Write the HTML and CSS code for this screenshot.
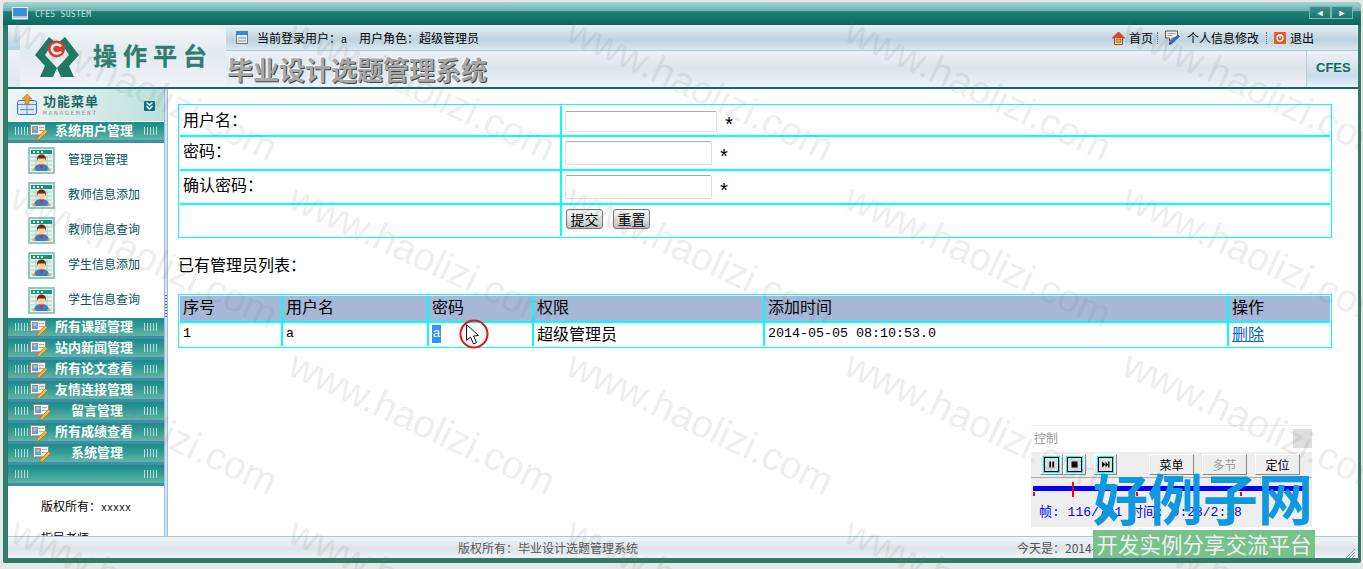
FILE: index.html
```html
<!DOCTYPE html>
<html lang="zh-CN">
<head>
    <meta charset="UTF-8">
    <title>毕业设计选题管理系统</title>
    <link rel="stylesheet" href="styles.css">
</head>
<body>
    <svg class="sprites" width="0" height="0">
        <symbol id="person-sheet" viewBox="0 0 27 27">
            <rect width="27" height="27" fill="#8fcac2"/>
            <rect x="2" y="2" width="23" height="23" fill="#e6f3ea"/>
            <rect x="3" y="3" width="21" height="4" fill="#1f8f80"/>
            <path d="M5 4h2v2H5zM9 4h2v2H9zM13 4h2v2h-2z" fill="#d8f0e8"/>
            <path d="M3 10h21M3 14h21M3 18h21M3 22h21M8 8v16M19 8v16" stroke="#a9d0bc" fill="none"/>
            <path d="M6 24c0-5 3-7 7.500-7s7.500 2 7.500 7z" fill="#3c7cc8"/>
            <path d="M4.500 22h3v2h-3zM19.500 22h3v2h-3z" fill="#f0a030"/>
            <path d="M12.500 17h2l.5 3-1.500 2-1.500-2z" fill="#d8282c"/>
            <ellipse cx="13.500" cy="13" rx="4" ry="4.500" fill="#f7cfa0"/>
            <path d="M9 14c-.5-5 2-6.500 4.500-6.500S18.500 9 18 14l-1-2.500h-7z" fill="#6a2a10"/>
        </symbol>
        <symbol id="card-pencil" viewBox="0 0 18 18">
            <rect x=".5" y="1.500" width="15" height="11" fill="#f4f4f4" stroke="#8a8a8a"/>
            <rect x="2" y="3" width="6" height="7" fill="#6aa0d8"/>
            <circle cx="5" cy="5.500" r="1.800" fill="#e8b078"/>
            <path d="M9 4h5v1H9zM9 7h5v1H9zM2 11h11v1H2z" fill="#b0b0b0"/>
            <path d="M15.500 6.500l2 2-8 8-3 1 1-3z" fill="#eeb838" stroke="#a06a10" stroke-width=".6"/>
        </symbol>
    </svg>

    <div class="window">
        <div class="titlebar">
            <svg class="monitor" width="16" height="13" viewBox="0 0 16 13">
                <rect x=".5" y=".5" width="15" height="9.500" fill="#3c8fd8" stroke="#f0f4f4"/>
                <rect x="0" y="10.500" width="16" height="2" fill="#e8eeee"/>
            </svg>
            <span class="titlebar-name">CFES SUSTEM</span>
            <div class="nav-arrows">
                <span class="nav-arrow">◄</span>
                <span class="nav-arrow">►</span>
            </div>
        </div>

        <div class="frame">
            <div class="header">
                <div class="brand">
                    <div class="brand-tab">
                        <svg class="logo" width="46" height="42" viewBox="0 0 46 42">
                            <path d="M15 1L1 19l10 11-5 11h13l4-9-12-13L20 5z" fill="#1e7a5e"/>
                            <path d="M31 1l14 18-10 11 5 11H27l-4-9 12-13L26 5z" fill="#1e7a5e"/>
                            <circle cx="22.500" cy="13" r="8.500" fill="#e8342c"/>
                            <path d="M27 10.500a5 4.500 0 1 0 0 5" fill="none" stroke="#fff" stroke-width="2.600"/>
                        </svg>
                        <span class="brand-name">操作平台</span>
                    </div>
                </div>
                <div class="header-main">
                    <div class="userbar">
                        <svg class="userbar-icon" width="12" height="13" viewBox="0 0 12 13">
                            <rect x=".5" y=".5" width="11" height="12" fill="#e8e8e8" stroke="#6a7a88"/>
                            <rect x="1" y="1" width="10" height="3" fill="#2f8ae0"/>
                            <path d="M2 7h8M2 10h8" stroke="#8a9aa8"/>
                        </svg>
                        <span>当前登录用户：<span class="mono-small">a</span></span>
                        <span class="role">用户角色：超级管理员</span>
                        <div class="userbar-links">
                            <a class="toplink">
                                <svg width="13" height="14" viewBox="0 0 13 14">
                                    <path d="M6.500 1L.5 7h2v6.500h8V7h2z" fill="#f4e8c8" stroke="#a04020"/>
                                    <path d="M6.500 1L.5 7h12z" fill="#d8442c"/>
                                    <rect x="4" y="8" width="5" height="3.500" fill="#f0b020" stroke="#805010" stroke-width=".6"/>
                                </svg>
                                首页
                            </a>
                            <span class="sep sep--first"></span>
                            <a class="toplink toplink--wide">
                                <svg width="15" height="15" viewBox="0 0 15 15">
                                    <path d="M.5 1h12v7h-5l-3 3V8h-4z" fill="#f4f4f4" stroke="#555"/>
                                    <path d="M2.500 3.500h8M2.500 5.500h5" stroke="#999"/>
                                    <path d="M13 5l1.500 1.500-8 7.500-2.500.5.500-2.500z" fill="#2f70c8" stroke="#123a78" stroke-width=".5"/>
                                    <path d="M4 14.500l.5-2.500 2 2z" fill="#d82820"/>
                                </svg>
                                个人信息修改
                            </a>
                            <span class="sep"></span>
                            <a class="toplink">
                                <svg width="12" height="12" viewBox="0 0 12 12">
                                    <rect width="12" height="12" rx="1" fill="#e8582c"/>
                                    <circle cx="6" cy="6" r="3" fill="none" stroke="#fff" stroke-width="1.300"/>
                                    <path d="M6 2.500v3.500" stroke="#fff" stroke-width="1.300"/>
                                </svg>
                                退出
                            </a>
                        </div>
                    </div>
                    <div class="titleband">
                        <h1 class="system-title">毕业设计选题管理系统</h1>
                        <div class="cfes">CFES</div>
                    </div>
                </div>
            </div>

            <div class="body">
                <div class="sidebar">
                    <div class="menu-head">
                        <svg width="20" height="21" viewBox="0 0 20 21">
                            <rect x=".5" y="6.500" width="19" height="14" rx="2" fill="#d8e8fa" stroke="#3a70c8"/>
                            <path d="M1 10.500h18M10 11v9M3 15.500h14" stroke="#5a90d8"/>
                            <path d="M10 0l5 5h-3v5H8V5H5z" fill="#f0a020" stroke="#b06a10" stroke-width=".6"/>
                        </svg>
                        <div class="menu-head-text">
                            <div class="menu-head-title">功能菜单</div>
                            <div class="menu-head-sub">MANAGEMENT</div>
                        </div>
                        <svg class="menu-toggle" width="11" height="10" viewBox="0 0 11 10">
                            <rect width="11" height="10" rx="1" fill="#0f6f80"/>
                            <path d="M2.500 1.500l3 2.500 3-2.500M2.500 5l3 3 3-3" fill="none" stroke="#fff" stroke-width="1.400"/>
                        </svg>
                    </div>

                    <div class="bar">
                        <span class="ticks"></span>
                        <svg class="bar-icon" width="18" height="18"><use href="#card-pencil"/></svg>
                        <span class="bar-label">系统用户管理</span>
                        <span class="ticks ticks--end"></span>
                    </div>
                    <a class="sub-item"><svg width="27" height="27"><use href="#person-sheet"/></svg>管理员管理</a>
                    <a class="sub-item"><svg width="27" height="27"><use href="#person-sheet"/></svg>教师信息添加</a>
                    <a class="sub-item"><svg width="27" height="27"><use href="#person-sheet"/></svg>教师信息查询</a>
                    <a class="sub-item"><svg width="27" height="27"><use href="#person-sheet"/></svg>学生信息添加</a>
                    <a class="sub-item"><svg width="27" height="27"><use href="#person-sheet"/></svg>学生信息查询</a>

                    <div class="bar">
                        <span class="ticks"></span>
                        <svg class="bar-icon" width="18" height="18"><use href="#card-pencil"/></svg>
                        <span class="bar-label">所有课题管理</span>
                        <span class="ticks ticks--end"></span>
                    </div>
                    <div class="bar">
                        <span class="ticks"></span>
                        <svg class="bar-icon" width="18" height="18"><use href="#card-pencil"/></svg>
                        <span class="bar-label">站内新闻管理</span>
                        <span class="ticks ticks--end"></span>
                    </div>
                    <div class="bar">
                        <span class="ticks"></span>
                        <svg class="bar-icon" width="18" height="18"><use href="#card-pencil"/></svg>
                        <span class="bar-label">所有论文查看</span>
                        <span class="ticks ticks--end"></span>
                    </div>
                    <div class="bar">
                        <span class="ticks"></span>
                        <svg class="bar-icon" width="18" height="18"><use href="#card-pencil"/></svg>
                        <span class="bar-label">友情连接管理</span>
                        <span class="ticks ticks--end"></span>
                    </div>
                    <div class="bar bar--short">
                        <span class="ticks"></span>
                        <svg class="bar-icon" width="18" height="18"><use href="#card-pencil"/></svg>
                        <span class="bar-label">留言管理</span>
                        <span class="ticks ticks--end"></span>
                    </div>
                    <div class="bar">
                        <span class="ticks"></span>
                        <svg class="bar-icon" width="18" height="18"><use href="#card-pencil"/></svg>
                        <span class="bar-label">所有成绩查看</span>
                        <span class="ticks ticks--end"></span>
                    </div>
                    <div class="bar bar--short">
                        <span class="ticks"></span>
                        <svg class="bar-icon" width="18" height="18"><use href="#card-pencil"/></svg>
                        <span class="bar-label">系统管理</span>
                        <span class="ticks ticks--end"></span>
                    </div>
                    <div class="bar">
                        <span class="ticks"></span>
                        <span class="ticks ticks--end"></span>
                    </div>

                    <div class="side-note">
                        <p>版权所有：<span class="mono-small">xxxxx</span></p>
                        <p>指导老师</p>
                    </div>
                </div>

                <div class="splitter"><span class="splitter-grip"></span></div>

                <div class="main">
                    <div class="box box--form">
                        <table class="form-table">
                            <tr>
                                <td class="label-cell">用户名：</td>
                                <td class="field-cell"><input class="field field--wide" type="text"><span class="req req--wide">*</span></td>
                            </tr>
                            <tr>
                                <td class="label-cell">密码：</td>
                                <td class="field-cell"><input class="field" type="password"><span class="req">*</span></td>
                            </tr>
                            <tr>
                                <td class="label-cell">确认密码：</td>
                                <td class="field-cell"><input class="field" type="password"><span class="req">*</span></td>
                            </tr>
                            <tr>
                                <td class="label-cell"></td>
                                <td class="field-cell field-cell--btns"><button class="btn">提交</button><button class="btn">重置</button></td>
                            </tr>
                        </table>
                    </div>

                    <p class="list-title">已有管理员列表：</p>

                    <div class="box">
                        <table class="list-table">
                            <colgroup>
                                <col class="col-no"><col class="col-user"><col class="col-pass">
                                <col class="col-role"><col class="col-time"><col>
                            </colgroup>
                            <tr>
                                <th>序号</th><th>用户名</th><th>密码</th><th>权限</th><th>添加时间</th><th>操作</th>
                            </tr>
                            <tr>
                                <td class="mono">1</td>
                                <td class="mono">a</td>
                                <td class="mono"><span class="selected">a</span></td>
                                <td>超级管理员</td>
                                <td class="mono">2014-05-05 08:10:53.0</td>
                                <td><a class="del-link">删除</a></td>
                            </tr>
                        </table>
                    </div>
                </div>
            </div>

            <div class="statusbar">
                <span class="status-copy">版权所有：毕业设计选题管理系统</span>
                <span class="status-date">今天是：2014-05-05</span>
                <svg class="grip" width="10" height="10" viewBox="0 0 10 10">
                    <path d="M10 1L1 10M10 4L4 10M10 7L7 10" stroke="#8a9a9a"/>
                </svg>
            </div>
        </div>
    </div>

    <!-- recorder control panel and site stamp sit over the page -->
    <div class="player">
        <div class="player-title">控制<span class="player-close"></span></div>
        <div class="player-body">
            <div class="player-tools">
                <div class="icon-btns">
                    <span class="icon-btn">
                        <svg class="glyph" width="15" height="15" viewBox="0 0 15 15">
                            <path d="M5 4h2v7H5zM8.500 4h2v7h-2z"/>
                        </svg>
                    </span>
                    <span class="icon-btn">
                        <svg class="glyph" width="15" height="15" viewBox="0 0 15 15">
                            <path d="M4 4h7v7H4z"/>
                        </svg>
                    </span>
                </div>
                <span class="icon-btn icon-btn--solo">
                    <svg class="glyph" width="15" height="15" viewBox="0 0 15 15">
                        <path d="M3.500 4l4 3.500-4 3.500zM7.500 4l3 3.500-3 3.500zM10.500 4h1.500v7h-1.500z"/>
                    </svg>
                </span>
                <span class="text-btn text-btn--first">菜单</span>
                <span class="text-btn text-btn--off">多节</span>
                <span class="text-btn">定位</span>
            </div>
            <div class="timeline">
                <span class="tick tick--a"></span>
                <span class="tick tick--b"></span>
                <span class="tick tick--c"></span>
                <span class="tick tick--now"></span>
            </div>
            <div class="player-info">帧: 116/701 时间: 0:23/2:38</div>
        </div>
    </div>

    <svg class="cursor-mark" width="30" height="30" viewBox="0 0 30 30">
        <circle cx="15" cy="15" r="13.500" fill="none" stroke="#e01818" stroke-width="2"/>
        <path d="M7.500 5.500v16l4-3.500 3 7 3-1.500-3-6.500 5-.5z" fill="#fff" stroke="#111"/>
    </svg>

    <div class="watermarks">
        <span>www.haolizi.com</span><span>www.haolizi.com</span><span>www.haolizi.com</span><span>www.haolizi.com</span><span>www.haolizi.com</span>
        <span>www.haolizi.com</span><span>www.haolizi.com</span><span>www.haolizi.com</span><span>www.haolizi.com</span><span>www.haolizi.com</span>
        <span>www.haolizi.com</span><span>www.haolizi.com</span><span>www.haolizi.com</span><span>www.haolizi.com</span><span>www.haolizi.com</span>
        <span>www.haolizi.com</span><span>www.haolizi.com</span><span>www.haolizi.com</span><span>www.haolizi.com</span><span>www.haolizi.com</span>
    </div>

    <div class="stamp">
        <div class="stamp-name">好例子网</div>
        <div class="stamp-sub">开发实例分享交流平台</div>
    </div>
</body>
</html>
```

FILE: styles.css
```css
* {
    box-sizing: border-box;
}
html, body {
    margin: 0;
    padding: 0;
    height: 569px;
    overflow: hidden;
}
body {
    position: relative;
    background-color: #e4e8e6;
    font-family: "Noto Sans CJK SC", "Liberation Sans", sans-serif;
    font-size: 12px;
    color: #000;
}
.sprites {
    position: absolute;
}
.mono-small {
    font-family: "Liberation Mono", monospace;
    font-size: 10px;
}

/* window chrome */
.window {
    margin: 2px 2px 0 3px;
    height: 561px;
    display: flex;
    flex-direction: column;
    background-color: #2f7a68;
    border-radius: 5px 5px 2px 2px;
    overflow: hidden;
}
.titlebar {
    height: 23px;
    flex: none;
    display: flex;
    align-items: center;
    padding: 0 8px 2px 9px;
    background: linear-gradient(#a9d6d4 0, #6db1b0 38%, #1f7f76 42%, #0c665e 100%);
}
.monitor {
    margin-top: 1px;
}
.titlebar-name {
    margin-left: 7px;
    margin-top: 3px;
    font-family: "DejaVu Sans Mono", monospace;
    font-size: 8px;
    letter-spacing: 0.3px;
    color: #c8e4e0;
}
.nav-arrows {
    margin-left: auto;
    display: flex;
}
.nav-arrow {
    width: 22px;
    height: 13px;
    border: 1px solid #7fb4b0;
    background: linear-gradient(#3c8f8c, #1c7470);
    color: #eff;
    font-size: 9px;
    line-height: 11px;
    text-align: center;
}
.frame {
    flex: 1;
    min-height: 0;
    display: flex;
    flex-direction: column;
    padding: 0 3px 5px 5px;
}

/* header */
.header {
    height: 64px;
    flex: none;
    display: flex;
    border-bottom: 2px solid #0f6a64;
}
.brand {
    width: 218px;
    flex: none;
    background: linear-gradient(#eef3f5 0, #b9d2df 24px, #b9d2df 25px, #eef0f8 25px, #dfe7ec 100%);
}
.brand-tab {
    margin: 4px 0 0 12px;
    height: 58px;
    display: flex;
    align-items: flex-start;
    padding: 7px 0 0 14px;
    background: linear-gradient(#f2f5f8 0, #e2eaee 40%, #f0f2f8 100%);
    border-radius: 6px 6px 0 0;
}
.logo {
    flex: none;
}
.brand-name {
    margin: 5px 0 0 13px;
    font-size: 24px;
    line-height: 28px;
    font-weight: 700;
    letter-spacing: 6px;
    color: #2e7d6e;
    -webkit-text-stroke: 0.3px #2e7d6e;
    white-space: nowrap;
}
.header-main {
    flex: 1;
    min-width: 0;
    display: flex;
    flex-direction: column;
}
.userbar {
    height: 25px;
    flex: none;
    display: flex;
    align-items: center;
    padding: 0 44px 0 10px;
    background: linear-gradient(#e8eff3 0, #bcd3e0 60%, #dde8ee 100%);
}
.userbar-icon {
    margin-right: 9px;
}
.role {
    margin-left: 12px;
}
.userbar-links {
    margin-left: auto;
    display: flex;
    align-items: center;
}
.toplink {
    display: flex;
    align-items: center;
    gap: 4px;
}
.toplink--wide {
    gap: 7px;
}
.sep {
    width: 1px;
    height: 12px;
    margin: 0 7px 0 7px;
    border-left: 1px dotted #777;
}
.sep--first {
    margin: 0 7px 0 4px;
}
.titleband {
    flex: 1;
    display: flex;
    border-top: 1px solid #a6c8d0;
    background: linear-gradient(#eef0f8 0, #dbe5ea 50%, #eef1f8 100%);
}
.system-title {
    margin: 2px 0 0 1px;
    font-size: 26px;
    line-height: 32px;
    font-weight: 700;
    color: #a8a8a8;
    text-shadow: 1px 1px 0 #444, -1px -1px 0 #fff;
    white-space: nowrap;
}
.cfes {
    margin-left: auto;
    width: 52px;
    padding: 9px 0 0 9px;
    border-left: 1px solid #b4cdd2;
    background: linear-gradient(#eef1f8 0, #d8e4ec 45%, #c4dcec 70%, #eef1f8 100%);
    font-family: "Liberation Sans", sans-serif;
    font-size: 13px;
    line-height: 16px;
    font-weight: 700;
    color: #0c6a60;
}

/* body */
.body {
    flex: 1;
    min-height: 0;
    display: flex;
    background-color: #fff;
}
.sidebar {
    width: 156px;
    flex: none;
    overflow: hidden;
    background-color: #fff;
}
.menu-head {
    height: 33px;
    display: flex;
    align-items: flex-start;
    padding: 5px 9px 0 9px;
    background: linear-gradient(100deg, #f0f4f4 0, #dcecea 45%, #b8e0dc 100%);
    border-bottom: 1px solid #fff;
}
.menu-head-text {
    margin-left: 6px;
}
.menu-head-title {
    font-size: 13px;
    line-height: 14px;
    font-weight: 700;
    letter-spacing: 1px;
    color: #17695f;
}
.menu-head-sub {
    margin-top: 1px;
    font-family: "DejaVu Sans Mono", monospace;
    font-size: 6px;
    line-height: 8px;
    letter-spacing: 1.900px;
    color: #7f9694;
}
.menu-toggle {
    margin: 7px 0 0 auto;
}
.bar {
    height: 21px;
    display: flex;
    align-items: center;
    padding: 0 6px 0 7px;
    background: linear-gradient(#1c8a8c 0, #2f9892 40%, #62b5a6 100%);
    border-bottom: 3px solid #3d90a8;
    color: #fff;
    font-size: 13px;
    font-weight: 700;
}
.ticks {
    width: 14px;
    height: 8px;
    flex: none;
    background: repeating-linear-gradient(90deg, #b8dcd8 0 1px, transparent 1px 3px);
}
.ticks--end {
    margin-left: auto;
}
.bar-icon {
    margin-left: 1px;
    margin-top: 2px;
    flex: none;
}
.bar-label {
    margin-left: 7px;
    margin-bottom: 3px;
    line-height: 16px;
    white-space: nowrap;
}
.bar--short .bar-icon {
    margin-left: 4px;
}
.bar--short .bar-label {
    margin-left: 20px;
}
.sub-item {
    height: 35px;
    display: flex;
    align-items: center;
    gap: 13px;
    padding: 0 0 4px 20px;
    color: #06525a;
}
.sub-item svg {
    margin-top: 4px;
}
.side-note {
    padding: 11px 0 0 33px;
}
.side-note p {
    margin: 0 0 11px;
    line-height: 18px;
}
.splitter {
    width: 4px;
    flex: none;
    display: flex;
    align-items: center;
    background-color: #d5e4f2;
    border-left: 1px solid #9fbcd0;
    border-right: 1px solid #9fbcd0;
}
.splitter-grip {
    display: block;
    width: 100%;
    height: 22px;
    margin-top: -13px;
    background: repeating-linear-gradient(#667 0 1px, #cde 1px 3px);
}

/* main content */
.main {
    flex: 1;
    min-width: 0;
    padding: 15px 26px 0 10px;
    font-size: 16px;
}
.box {
    border: 1px solid #0ff;
    padding: 1px;
}
table {
    width: 100%;
    border-collapse: collapse;
    table-layout: fixed;
}
td, th {
    border: 2px solid #0ff;
    padding: 0 3px;
    font-weight: 400;
    text-align: left;
}
tr:first-child td, tr:first-child th {
    border-top: 0;
}
tr:last-child td {
    border-bottom: 0;
}
td:first-child, th:first-child {
    border-left: 0;
}
td:last-child, th:last-child {
    border-right: 0;
}
.form-table tr {
    height: 34px;
}
.form-table tr:first-child {
    height: 30px;
}
.form-table tr:last-child {
    height: 29px;
}
.form-table td {
    line-height: 22px;
}
.label-cell {
    width: 381px;
    padding-bottom: 3px;
}
.form-table tr + tr .label-cell {
    padding-bottom: 7px;
}
.field-cell {
    padding-left: 3px;
}
.form-table .field-cell--btns {
    padding-bottom: 7px;
}
.field {
    width: 147px;
    height: 24px;
    vertical-align: middle;
    border: 1px solid #dfe0e4;
    border-top-color: #a8a8b0;
    border-radius: 2px;
    background-color: #fff;
}
.field--wide {
    width: 152px;
    height: 21px;
    margin-top: 2px;
}
.req {
    margin-left: 6px;
    font-family: "Liberation Mono", monospace;
    font-size: 20px;
    line-height: 16px;
    vertical-align: -7px;
}
.btn {
    width: 37px;
    height: 20px;
    margin: 0 9px 0 1px;
    padding: 0;
    border: 1px solid #777;
    border-radius: 3px;
    background: linear-gradient(#f4f4f4, #e6e6e6 50%, #bdbdbd);
    font-family: inherit;
    font-size: 14px;
    line-height: 16px;
    color: #000;
    vertical-align: middle;
}
.list-title {
    margin: 15px 0 19px;
    line-height: 22px;
}
.list-table tr {
    height: 24px;
}
.list-table th, .list-table td {
    line-height: 20px;
    padding-bottom: 3px;
}
.list-table th {
    height: 25px;
    padding-bottom: 5px;
    background-color: #a6b7d8;
}
.col-no {
    width: 102px;
}
.col-user {
    width: 146px;
}
.col-pass {
    width: 105px;
}
.col-role {
    width: 231px;
}
.col-time {
    width: 464px;
}
.list-table td.mono {
    font-family: "Liberation Mono", monospace;
    font-size: 13.330px;
    padding-bottom: 1px;
}
.selected {
    display: inline-block;
    padding: 0 0.5px;
    background-color: #3390ff;
    color: #fff;
    line-height: 18px;
}
.del-link {
    color: #0066cc;
    text-decoration: underline;
}

/* status bar */
.statusbar {
    height: 22px;
    flex: none;
    display: flex;
    align-items: center;
    padding-right: 3px;
    border-top: 1px solid #a8c8d8;
    background: linear-gradient(#f2f5f6 0, #dde4e6 55%, #f0f3f4 100%);
    color: #555;
}
.status-copy {
    margin-left: 450px;
}
.status-date {
    margin-left: 379px;
}
.grip {
    margin-left: auto;
    align-self: flex-end;
}

/* overlays */
.player {
    position: absolute;
    left: 1031px;
    top: 425px;
    width: 281px;
    height: 102px;
    background-color: #fff;
    border-top: 1px solid #eee;
}
.player-title {
    height: 26px;
    display: flex;
    padding: 3px 0 0 3px;
    color: #999;
    line-height: 18px;
}
.player-close {
    width: 19px;
    height: 19px;
    margin-left: auto;
    background-color: #ddd;
}
.player-body {
    height: 75px;
    background-color: #eee;
}
.player-tools {
    height: 26px;
    display: flex;
    padding: 2px 0 0 9px;
    border-bottom: 1px solid #aaa;
}
.icon-btns {
    display: flex;
}
.icon-btn {
    width: 23px;
    height: 21px;
    display: flex;
    align-items: center;
    justify-content: center;
    background-color: #eee;
    border: 1px solid #fff;
    border-right-color: #888;
    border-bottom-color: #888;
}
.icon-btn--solo {
    margin-left: 8px;
}
.glyph {
    display: block;
    border: 1px solid #000;
    outline: 1px solid #0ff;
    background-color: #ddd;
}
.text-btn {
    width: 45px;
    height: 21px;
    margin-left: 8px;
    background-color: #eee;
    border: 1px solid #fff;
    border-right-color: #888;
    border-bottom-color: #888;
    font-size: 12px;
    line-height: 19px;
    text-align: center;
}
.text-btn--first {
    margin-left: 32px;
}
.text-btn--off {
    color: #999;
}
.timeline {
    position: relative;
    height: 5px;
    margin: 8px 8px 0 2px;
    background-color: #00f;
}
.tick {
    position: absolute;
    width: 2px;
    height: 4px;
    top: 6px;
    background-color: #f00;
}
.tick--a {
    left: 0;
}
.tick--b {
    left: 103px;
}
.tick--c {
    left: 207px;
}
.tick--now {
    left: 39px;
    top: -4px;
    height: 15px;
}
.player-info {
    margin: 14px 0 0 8px;
    font-family: "Liberation Mono", "Noto Sans CJK SC", monospace;
    font-size: 13px;
    line-height: 16px;
    color: #00f;
}
.cursor-mark {
    position: absolute;
    left: 459px;
    top: 319px;
}
.watermarks {
    position: absolute;
    left: 0;
    top: 0;
    width: 1363px;
    height: 569px;
    overflow: hidden;
    display: grid;
    grid-template-columns: repeat(5, 278px);
    grid-auto-rows: 167px;
    padding: 10px 0 0 22px;
    pointer-events: none;
}
.watermarks span {
    display: block;
    font-family: "Liberation Sans", sans-serif;
    font-size: 39px;
    line-height: 39px;
    white-space: nowrap;
    color: rgba(120, 120, 120, 0.15);
    transform: rotate(25deg);
    transform-origin: 0 0;
}
.stamp {
    position: absolute;
    left: 1093px;
    top: 466px;
    width: 222px;
}
.stamp-name {
    height: 64px;
    font-size: 55px;
    line-height: 60px;
    font-weight: 700;
    color: #0f98de;
    white-space: nowrap;
}
.stamp-sub {
    height: 28px;
    background-color: #78c08c;
    color: rgba(255, 255, 255, 0.85);
    font-size: 21.500px;
    line-height: 27px;
    text-align: center;
    white-space: nowrap;
}
```
